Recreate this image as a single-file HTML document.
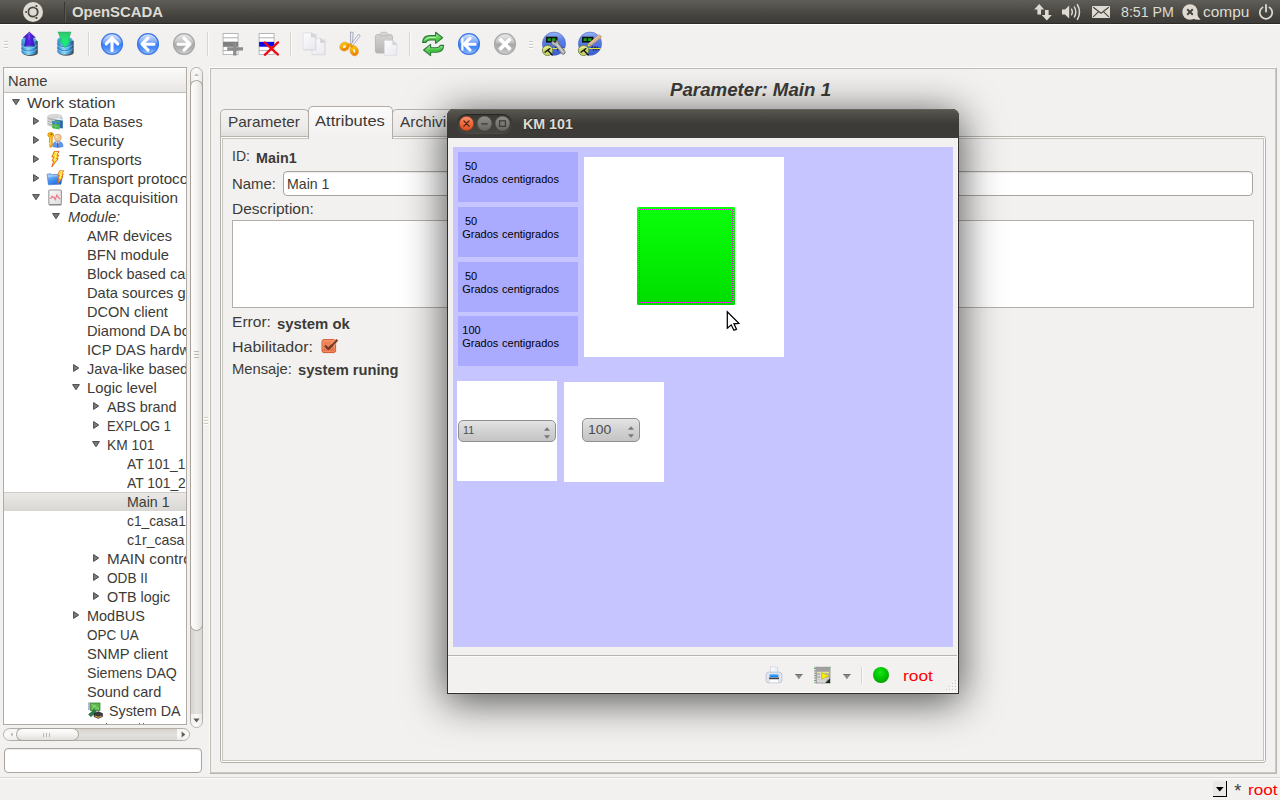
<!DOCTYPE html>
<html><head><meta charset="utf-8"><title>OpenSCADA</title>
<style>
html,body{margin:0;padding:0;width:1280px;height:800px;overflow:hidden;background:#f2f1f0;font-family:"Liberation Sans",sans-serif;}
#root{position:relative;width:1280px;height:800px;overflow:hidden;background:#f2f1f0;}
.t{position:absolute;white-space:pre;}
.a{position:absolute;}
svg{position:absolute;overflow:visible;}
</style></head><body><div id="root">
<div class="a" style="left:0;top:0;width:1280px;height:23px;background:linear-gradient(#5f5e58 0%,#55544f 25%,#4a4944 52%,#403f3b 80%,#3c3b37 100%);"></div><div class="a" style="left:0;top:23px;width:1280px;height:1px;background:#2b2a27;"></div><div class="a" style="left:64px;top:2px;width:1px;height:20px;background:#383733;"></div><div class="a" style="left:65px;top:2px;width:1px;height:20px;background:#585751;"></div><svg style="left:23px;top:2px" width="20" height="20" viewBox="0 0 20 20"><circle cx="10" cy="10" r="10" fill="#dfdbd2"/>
<circle cx="10" cy="10" r="4.7" fill="none" stroke="#45443f" stroke-width="1.8"/>
<g fill="#dfdbd2"><circle cx="3.2" cy="10" r="1.8"/><circle cx="13.4" cy="4.1" r="1.8"/><circle cx="13.4" cy="15.9" r="1.8"/></g>
<g fill="#45443f"><circle cx="3.2" cy="10" r="1.1"/><circle cx="13.4" cy="4.1" r="1.1"/><circle cx="13.4" cy="15.9" r="1.1"/></g></svg><span class="t " style="left:72.12px;top:3.30px;font-size:15px;line-height:17px;color:#dfdbd2;transform:scaleX(0.9916);transform-origin:0 0;font-weight:bold;">OpenSCADA</span><svg style="left:1034px;top:3px" width="18" height="18" viewBox="0 0 18 18"><g fill="#dfdbd2"><path d="M5.2 1 L10.2 6.5 L7 6.5 L7 11.5 L3.4 11.5 L3.4 6.5 L0.2 6.5 Z"/><path d="M12.8 17.5 L7.8 12 L11 12 L11 7 L14.6 7 L14.6 12 L17.8 12 Z"/></g></svg><svg style="left:1061px;top:3px" width="21" height="18" viewBox="0 0 21 18"><g fill="#dfdbd2"><path d="M1 6.5 L4 6.5 L8.2 2.6 L8.2 15.4 L4 11.5 L1 11.5 Z"/></g>
<g fill="none" stroke="#dfdbd2" stroke-width="1.5" stroke-linecap="round"><path d="M10.6 6.2 Q12.2 9 10.6 11.8"/><path d="M13.4 4 Q16.2 9 13.4 14"/><path d="M16.4 1.6 Q20.6 9 16.4 16.4"/></g></svg><svg style="left:1092px;top:6px" width="18" height="12" viewBox="0 0 18 12"><rect x="0" y="0" width="18" height="12" rx="1" fill="#dfdbd2"/><path d="M1.2 1.2 L9 7.2 L16.8 1.2 M1.2 10.8 L6.6 5.6 M16.8 10.8 L11.4 5.6" stroke="#45443f" stroke-width="1.1" fill="none"/></svg><span class="t " style="left:1120.62px;top:2.90px;font-size:15px;line-height:17px;color:#dfdbd2;transform:scaleX(0.9468);transform-origin:0 0;">8:51 PM</span><svg style="left:1182px;top:4px" width="19" height="17" viewBox="0 0 19 17"><circle cx="8" cy="8" r="7.7" fill="#dfdbd2"/><path d="M10.5 14.5 Q15 16.2 18.6 15.6 Q15.6 13.6 15.2 9.5 Z" fill="#dfdbd2"/><path d="M5.2 5.2 L10.8 10.8 M10.8 5.2 L5.2 10.8" stroke="#45443f" stroke-width="2" /></svg><span class="t " style="left:1202.62px;top:2.90px;font-size:15px;line-height:17px;color:#dfdbd2;transform:scaleX(1.0304);transform-origin:0 0;">compu</span><svg style="left:1258px;top:4px" width="16" height="16" viewBox="0 0 16 16"><path d="M4.6 3.4 A6.2 6.2 0 1 0 11.4 3.4" fill="none" stroke="#dfdbd2" stroke-width="1.7" stroke-linecap="round"/><path d="M8 0.8 L8 7.6" stroke="#dfdbd2" stroke-width="1.8" stroke-linecap="round"/></svg><div class="a" style="left:0;top:24px;width:1280px;height:1px;background:#ffffff;"></div><div class="a" style="left:4px;top:41px;width:4px;height:1px;background:#cfcbc5;"></div><div class="a" style="left:4px;top:42px;width:4px;height:1px;background:#ffffff;"></div><div class="a" style="left:4px;top:44px;width:4px;height:1px;background:#cfcbc5;"></div><div class="a" style="left:4px;top:45px;width:4px;height:1px;background:#ffffff;"></div><div class="a" style="left:4px;top:47px;width:4px;height:1px;background:#cfcbc5;"></div><div class="a" style="left:4px;top:48px;width:4px;height:1px;background:#ffffff;"></div><div class="a" style="left:529px;top:41px;width:4px;height:1px;background:#cfcbc5;"></div><div class="a" style="left:529px;top:42px;width:4px;height:1px;background:#ffffff;"></div><div class="a" style="left:529px;top:44px;width:4px;height:1px;background:#cfcbc5;"></div><div class="a" style="left:529px;top:45px;width:4px;height:1px;background:#ffffff;"></div><div class="a" style="left:529px;top:47px;width:4px;height:1px;background:#cfcbc5;"></div><div class="a" style="left:529px;top:48px;width:4px;height:1px;background:#ffffff;"></div><div class="a" style="left:88px;top:32px;width:1px;height:24px;background:#d9d6d2;"></div><div class="a" style="left:89px;top:32px;width:1px;height:24px;background:#fafaf9;"></div><div class="a" style="left:207px;top:32px;width:1px;height:24px;background:#d9d6d2;"></div><div class="a" style="left:208px;top:32px;width:1px;height:24px;background:#fafaf9;"></div><div class="a" style="left:290px;top:32px;width:1px;height:24px;background:#d9d6d2;"></div><div class="a" style="left:291px;top:32px;width:1px;height:24px;background:#fafaf9;"></div><div class="a" style="left:409px;top:32px;width:1px;height:24px;background:#d9d6d2;"></div><div class="a" style="left:410px;top:32px;width:1px;height:24px;background:#fafaf9;"></div><svg width="0" height="0" style="left:0;top:0"><defs>
<linearGradient id="cyl" x1="0" y1="0" x2="1" y2="0"><stop offset="0" stop-color="#2a7fc4"/><stop offset="0.45" stop-color="#8fd8f6"/><stop offset="0.8" stop-color="#3b9ad6"/><stop offset="1" stop-color="#1c5f9c"/></linearGradient>
<linearGradient id="pur" x1="0" y1="0" x2="1" y2="0"><stop offset="0" stop-color="#3a12b8"/><stop offset="0.5" stop-color="#5a25e8"/><stop offset="1" stop-color="#3a10b0"/></linearGradient>
<linearGradient id="grn" x1="0" y1="0" x2="0" y2="1"><stop offset="0" stop-color="#36c070"/><stop offset="0.5" stop-color="#20e870"/><stop offset="1" stop-color="#12f078"/></linearGradient>
<linearGradient id="bluec" x1="0" y1="0" x2="0" y2="1"><stop offset="0" stop-color="#dfe9ff"/><stop offset="0.42" stop-color="#7ba6f6"/><stop offset="0.5" stop-color="#3a82ff"/><stop offset="0.7" stop-color="#4a8cfb"/><stop offset="1" stop-color="#9cc0f8"/></linearGradient>
<linearGradient id="grayc" x1="0" y1="0" x2="0" y2="1"><stop offset="0" stop-color="#ececec"/><stop offset="0.42" stop-color="#c4c4c4"/><stop offset="0.5" stop-color="#a9a9a9"/><stop offset="0.7" stop-color="#b0b0b0"/><stop offset="1" stop-color="#d0d0d0"/></linearGradient>
<linearGradient id="doc" x1="0" y1="0" x2="1" y2="1"><stop offset="0" stop-color="#fdfdfe"/><stop offset="1" stop-color="#e9e9ef"/></linearGradient>
<linearGradient id="clip" x1="0" y1="0" x2="0" y2="1"><stop offset="0" stop-color="#d4d4d4"/><stop offset="1" stop-color="#b4b4b4"/></linearGradient>
<radialGradient id="scada" cx="0.5" cy="0.35" r="0.75"><stop offset="0" stop-color="#6f92ee"/><stop offset="0.7" stop-color="#3b62d6"/><stop offset="1" stop-color="#2a48b0"/></radialGradient>
</defs></svg><svg style="left:17px;top:31px" width="24" height="25" viewBox="0 0 24 25"><g transform="translate(4.5,6.5)"><path d="M0 2.5 L0 14.5 A7.5 3 0 0 0 15 14.5 L15 2.5 Z" transform="translate(1.3,1)" fill="#1a1a1a" opacity="0.75"/><path d="M0 2.5 L0 14.5 A7.5 3 0 0 0 15 14.5 L15 2.5 Z" fill="url(#cyl)"/><ellipse cx="7.5" cy="2.5" rx="7.5" ry="2.6" fill="#4eaadc"/><path d="M0 6.5 A7.5 3 0 0 0 15 6.5" fill="none" stroke="#1f6fb0" stroke-width="0.9" opacity="0.8"/><path d="M0 7.4 A7.5 3 0 0 0 15 7.4" fill="none" stroke="#b4e8ff" stroke-width="0.7" opacity="0.7"/><path d="M0 10.5 A7.5 3 0 0 0 15 10.5" fill="none" stroke="#1f6fb0" stroke-width="0.9" opacity="0.8"/><path d="M0 11.4 A7.5 3 0 0 0 15 11.4" fill="none" stroke="#b4e8ff" stroke-width="0.7" opacity="0.7"/></g><path d="M12.3 1 L18.4 6.6 L15.6 6.8 L17.4 14.8 L7.4 14.8 L9.2 6.8 L6.2 6.6 Z" fill="url(#pur)" stroke="#3010a0" stroke-width="0.5" stroke-linejoin="round"/><path d="M12 2.6 L12 8" stroke="#8a6af0" stroke-width="1.6" opacity="0.6" stroke-linecap="round"/></svg><svg style="left:53px;top:31px" width="24" height="25" viewBox="0 0 24 25"><g transform="translate(4.4,6.2)"><path d="M0 2.5 L0 14.5 A7.5 3 0 0 0 15 14.5 L15 2.5 Z" transform="translate(1.3,1)" fill="#1a1a1a" opacity="0.75"/><path d="M0 2.5 L0 14.5 A7.5 3 0 0 0 15 14.5 L15 2.5 Z" fill="url(#cyl)"/><ellipse cx="7.5" cy="2.5" rx="7.5" ry="2.6" fill="#4eaadc"/><path d="M0 6.5 A7.5 3 0 0 0 15 6.5" fill="none" stroke="#1f6fb0" stroke-width="0.9" opacity="0.8"/><path d="M0 7.4 A7.5 3 0 0 0 15 7.4" fill="none" stroke="#b4e8ff" stroke-width="0.7" opacity="0.7"/><path d="M0 10.5 A7.5 3 0 0 0 15 10.5" fill="none" stroke="#1f6fb0" stroke-width="0.9" opacity="0.8"/><path d="M0 11.4 A7.5 3 0 0 0 15 11.4" fill="none" stroke="#b4e8ff" stroke-width="0.7" opacity="0.7"/></g><path d="M5 1 L18 1 L15.4 9.4 L17.6 9.2 L12 16.8 L6.4 9.2 L8.4 9.4 Z" fill="url(#grn)" stroke="#18a858" stroke-width="0.5" stroke-linejoin="round"/></svg><svg style="left:100px;top:32px" width="24" height="24" viewBox="0 0 24 24"><circle cx="12" cy="12.3" r="10.9" fill="#000" opacity="0.08"/><circle cx="12" cy="12" r="10.4" fill="url(#bluec)" stroke="#3b78e6" stroke-width="1.3"/><path d="M12 18.4 L12 6.6 M6.2 11.8 L12 6 L17.8 11.8" fill="none" stroke="#fff" stroke-width="3.1" stroke-linecap="round" stroke-linejoin="round"/></svg><svg style="left:136px;top:32px" width="24" height="24" viewBox="0 0 24 24"><circle cx="12" cy="12.3" r="10.9" fill="#000" opacity="0.08"/><circle cx="12" cy="12" r="10.4" fill="url(#bluec)" stroke="#3b78e6" stroke-width="1.3"/><path d="M18 12.2 L6.8 12.2 M12 6.2 L6 12.2 L12 18.2" fill="none" stroke="#fff" stroke-width="3.1" stroke-linecap="round" stroke-linejoin="round"/></svg><svg style="left:172px;top:32px" width="24" height="24" viewBox="0 0 24 24"><circle cx="12" cy="12.3" r="10.9" fill="#000" opacity="0.08"/><circle cx="12" cy="12" r="10.4" fill="url(#grayc)" stroke="#a8a8a8" stroke-width="1.3"/><path d="M6 12.2 L17.2 12.2 M12 6.2 L18 12.2 L12 18.2" fill="none" stroke="#fff" stroke-width="3.1" stroke-linecap="round" stroke-linejoin="round"/></svg><svg style="left:222px;top:32px" width="24" height="24" viewBox="0 0 24 24"><g transform="translate(0.6,0)"><rect x="0.5" y="1.5" width="15" height="21" fill="#fff" stroke="#b8b8b8" stroke-width="1"/><path d="M0.5 5.8 L15.5 5.8" stroke="#b0b0b0" stroke-width="1"/><path d="M0.5 10.0 L15.5 10.0" stroke="#b0b0b0" stroke-width="1"/><path d="M0.5 14.6 L15.5 14.6" stroke="#b0b0b0" stroke-width="1"/><path d="M0.5 18.6 L15.5 18.6" stroke="#b0b0b0" stroke-width="1"/><rect x="0.5" y="10" width="15" height="4.6" fill="#7f7f7f"/></g><path d="M5.2 16.9 L21 16.9 M12.8 11 L12.8 23.6" stroke="#8c8c8c" stroke-width="3.3" stroke-linecap="butt"/></svg><svg style="left:258px;top:32px" width="24" height="24" viewBox="0 0 24 24"><g transform="translate(0.6,0)"><rect x="0.5" y="1.5" width="15" height="21" fill="#fff" stroke="#b8b8b8" stroke-width="1"/><path d="M0.5 5.8 L15.5 5.8" stroke="#b0b0b0" stroke-width="1"/><path d="M0.5 10.0 L15.5 10.0" stroke="#b0b0b0" stroke-width="1"/><path d="M0.5 14.6 L15.5 14.6" stroke="#b0b0b0" stroke-width="1"/><path d="M0.5 18.6 L15.5 18.6" stroke="#b0b0b0" stroke-width="1"/><rect x="0.5" y="10" width="15" height="4.6" fill="#0a0aee"/></g><path d="M6.6 10.4 L20 22.6 M20 10.4 L6.8 22.8" stroke="#ee0a14" stroke-width="2.3" stroke-linecap="round"/></svg><svg style="left:302px;top:32px" width="25" height="24" viewBox="0 0 25 24"><rect x="10.6" y="7.3" width="13" height="16" fill="#000" opacity="0.08"/><path d="M10.0 6.4 L18.6 6.4 L22.6 10.4 L22.6 22.4 L10.0 22.4 Z" fill="url(#doc)" stroke="#dadae2" stroke-width="0.8" stroke-linejoin="round"/><path d="M18.6 6.4 L18.6 10.4 L22.6 10.4 Z" fill="#d6d6de" stroke="#c8c8d0" stroke-width="0.6"/><rect x="1.6" y="1.6" width="13" height="17" fill="#000" opacity="0.08"/><path d="M1.0 0.8 L9.4 0.8 L13.4 4.8 L13.4 17.4 L1.0 17.4 Z" fill="url(#doc)" stroke="#dadae2" stroke-width="0.8" stroke-linejoin="round"/><path d="M9.4 0.8 L9.4 4.8 L13.4 4.8 Z" fill="#d6d6de" stroke="#c8c8d0" stroke-width="0.6"/></svg><svg style="left:338px;top:31px" width="25" height="26" viewBox="0 0 25 26"><defs><linearGradient id="sc" x1="0" y1="0" x2="0" y2="1"><stop offset="0" stop-color="#f8c400"/><stop offset="1" stop-color="#f08400"/></linearGradient></defs>
<path d="M12.4 1 L15.2 1.4 L14.4 14.4 L12.6 14.2 Z" fill="#e8e9f2" stroke="#8c90a8" stroke-width="0.7" stroke-linejoin="round"/>
<path d="M20.6 3 L22.2 5 L14.6 14.6 L13 13.4 Z" fill="#f4f4fa" stroke="#8c90a8" stroke-width="0.7" stroke-linejoin="round"/>
<ellipse cx="6.5" cy="15.6" rx="3.2" ry="2.7" transform="rotate(-28 6.5 15.6)" fill="none" stroke="url(#sc)" stroke-width="3"/>
<ellipse cx="16.2" cy="19.8" rx="2.5" ry="3.5" transform="rotate(-18 16.2 19.8)" fill="none" stroke="url(#sc)" stroke-width="3"/>
<path d="M9.6 13.2 L13.4 14.6 L14.4 16.6" fill="none" stroke="#f2a000" stroke-width="2.6"/>
<ellipse cx="6.5" cy="15.6" rx="4.8" ry="4.3" transform="rotate(-28 6.5 15.6)" fill="none" stroke="#d88400" stroke-width="0.5"/>
<ellipse cx="16.2" cy="19.8" rx="4.1" ry="5.1" transform="rotate(-18 16.2 19.8)" fill="none" stroke="#d88400" stroke-width="0.5"/>
</svg><svg style="left:374px;top:31px" width="25" height="26" viewBox="0 0 25 26"><rect x="1.4" y="3.6" width="17" height="18.4" rx="2" fill="url(#clip)" stroke="#b0b0b0" stroke-width="0.8"/><path d="M5.6 4.6 Q5.6 1.2 10 1.2 Q14.4 1.2 14.4 4.6 Z" fill="#d8d8d8" stroke="#b8b8b8" stroke-width="0.8"/><rect x="5" y="3.8" width="10" height="1.6" fill="#c4c4c4"/><path d="M10.4 9.4 L18.8 9.4 L22.8 13.4 L22.8 24.4 L10.4 24.4 Z" fill="url(#doc)" stroke="#dadae2" stroke-width="0.8" stroke-linejoin="round"/><path d="M18.8 9.4 L18.8 13.4 L22.8 13.4 Z" fill="#d6d6de" stroke="#c8c8d0" stroke-width="0.6"/></svg><svg style="left:421px;top:31px" width="24" height="26" viewBox="0 0 24 26"><defs><linearGradient id="rf" x1="0" y1="0" x2="0" y2="1"><stop offset="0" stop-color="#c4f0b8"/><stop offset="0.5" stop-color="#58d050"/><stop offset="1" stop-color="#48b848"/></linearGradient></defs>
<path d="M1.6 11.4 Q2 4.6 9 4.6 L14.6 4.6 L14.6 1.2 L21.6 6.8 L14.6 12.4 L14.6 9 L9 9 Q5.8 9 5 11.4 Z" fill="url(#rf)" stroke="#2c7a36" stroke-width="1.1" stroke-linejoin="round"/>
<path d="M22.6 14.4 Q22.2 21.2 15.2 21.2 L9.6 21.2 L9.6 24.6 L2.6 19 L9.6 13.4 L9.6 16.8 L15.2 16.8 Q18.4 16.8 19.2 14.4 Z" fill="url(#rf)" stroke="#2c7a36" stroke-width="1.1" stroke-linejoin="round"/>
<path d="M4 9.4 Q5.2 6.4 9 6.4 L15 6.4" fill="none" stroke="#f0fff0" stroke-width="0.9" opacity="0.8"/>
<path d="M20.4 16.6 Q19.2 19.4 15.2 19.4 L8 19.4" fill="none" stroke="#30c038" stroke-width="1.2" opacity="0.9"/>
</svg><svg style="left:457px;top:32px" width="24" height="24" viewBox="0 0 24 24"><circle cx="12" cy="12.3" r="10.9" fill="#000" opacity="0.08"/><circle cx="12" cy="12" r="10.4" fill="url(#bluec)" stroke="#3b78e6" stroke-width="1.3"/><path d="M18.2 12.2 L8.6 12.2 M13 6.4 L7.2 12.2 L13 18" fill="none" stroke="#fff" stroke-width="3.1" stroke-linecap="round" stroke-linejoin="round"/><path d="M5.4 6.6 L5.4 17.8" fill="none" stroke="#fff" stroke-width="2.2" stroke-linecap="round"/></svg><svg style="left:493px;top:32px" width="24" height="24" viewBox="0 0 24 24"><circle cx="12" cy="12.3" r="10.9" fill="#000" opacity="0.08"/><circle cx="12" cy="12" r="10.4" fill="url(#grayc)" stroke="#a8a8a8" stroke-width="1.3"/><path d="M6.6 6.8 L17.4 17.6 M17.4 6.8 L6.6 17.6" fill="none" stroke="#fff" stroke-width="3.7" stroke-linecap="butt"/></svg><svg style="left:541px;top:31px" width="27" height="26" viewBox="0 0 27 26"><defs><linearGradient id="scg554" x1="0" y1="0" x2="0" y2="1"><stop offset="0" stop-color="#9ab4f4"/><stop offset="0.35" stop-color="#5a80e6"/><stop offset="1" stop-color="#3a5ed0"/></linearGradient></defs><circle cx="13" cy="12.7" r="11.6" fill="url(#scg554)" stroke="#4464c4" stroke-width="0.6"/><rect x="5.2" y="6" width="10.9" height="5.2" fill="#0a1406" stroke="#050a04" stroke-width="0.5"/><rect x="6.6" y="7.2" width="3.2" height="2.8" fill="#1e9a1e"/><rect x="11" y="7.2" width="3.6" height="2.8" fill="#1e9a1e"/><path d="M14 17.6 L15.4 15.2 L16.6 19.6 L18 15.4 L19.2 19.4 L20.4 15.6 L21.6 19 L22.6 16.6" fill="none" stroke="#182040" stroke-width="1" opacity="0.85"/><path d="M6 17.5 L23.6 17.5" stroke="#e4e43c" stroke-width="1"/><path d="M10.6 12.6 Q10 10.4 12 9.4 L13.4 11.4 L15.2 11 L15.4 9 Q18 9.6 17.6 12.6 L24 20.4 Q24.6 22 23.2 23 Q22 23.8 20.8 22.8 L14.6 15 Q11.6 15.6 10.6 12.6 Z" fill="#b4b4b4" stroke="#585858" stroke-width="0.7" stroke-linejoin="round"/><path d="M15.6 13.4 L22.4 21.4" stroke="#dcdcdc" stroke-width="0.9"/><circle cx="6.6" cy="19.4" r="5.2" fill="#c6d66a" stroke="#5c6828" stroke-width="0.7"/><path d="M2.4 18 Q6 14.6 10.8 17.6" fill="none" stroke="#e8f0a0" stroke-width="1.6" opacity="0.7"/><path d="M3.6 21.6 L9.3 17.2 M6.8 19.2 L11.6 24.4" stroke="#10100a" stroke-width="1.3" fill="none"/></svg><svg style="left:577px;top:31px" width="27" height="26" viewBox="0 0 27 26"><defs><linearGradient id="scg590" x1="0" y1="0" x2="0" y2="1"><stop offset="0" stop-color="#9ab4f4"/><stop offset="0.35" stop-color="#5a80e6"/><stop offset="1" stop-color="#3a5ed0"/></linearGradient></defs><circle cx="13" cy="12.7" r="11.6" fill="url(#scg590)" stroke="#4464c4" stroke-width="0.6"/><rect x="5.2" y="6" width="10.9" height="5.2" fill="#0a1406" stroke="#050a04" stroke-width="0.5"/><rect x="6.6" y="7.2" width="3.2" height="2.8" fill="#1e9a1e"/><rect x="11" y="7.2" width="3.6" height="2.8" fill="#1e9a1e"/><path d="M14 17.6 L15.4 15.2 L16.6 19.6 L18 15.4 L19.2 19.4 L20.4 15.6 L21.6 19 L22.6 16.6" fill="none" stroke="#182040" stroke-width="1" opacity="0.85"/><path d="M6 17.5 L23.6 17.5" stroke="#e4e43c" stroke-width="1"/><path d="M22.2 3.4 L24.8 6 L13.6 15 L11.4 12.6 Z" fill="#d8b48c" stroke="#a88460" stroke-width="0.5"/><path d="M22.8 3.8 L12.4 12.6" stroke="#ecd0b0" stroke-width="0.9"/><path d="M11.4 12.6 L13.6 15 L10 16.2 Z" fill="#e8dc78" stroke="#8a8040" stroke-width="0.4"/><path d="M10 16.2 L10.9 15.1 L11.2 15.9 Z" fill="#111"/><circle cx="6.6" cy="19.4" r="5.2" fill="#c6d66a" stroke="#5c6828" stroke-width="0.7"/><path d="M2.4 18 Q6 14.6 10.8 17.6" fill="none" stroke="#e8f0a0" stroke-width="1.6" opacity="0.7"/><path d="M3.6 21.6 L9.3 17.2 M6.8 19.2 L11.6 24.4" stroke="#10100a" stroke-width="1.3" fill="none"/></svg><div class="a" style="left:3px;top:67px;width:182px;height:656px;border:1px solid #b0aca5;background:#fff;overflow:hidden;"><div class="a" style="left:-4px;top:-68px;width:400px;height:800px;"><div class="a" style="left:4px;top:68px;width:182px;height:24px;background:linear-gradient(#ffffff 0,#f8f8f7 8%,#f1f0ef 55%,#e7e6e4 100%);border-bottom:1px solid #c2beb8;"></div><span class="t " style="left:8.03px;top:72.20px;font-size:15px;line-height:17px;color:#3c3b37;transform:scaleX(0.9846);transform-origin:0 0;">Name</span><div class="a" style="left:4px;top:492px;width:182px;height:19px;background:linear-gradient(#eae9e7,#d9d7d3);border-top:1px solid #cfccc7;box-sizing:border-box;"></div><svg style="left:12.2px;top:99.0px" width="8" height="7" viewBox="0 0 8 7"><path d="M0.6 0.6 L7.4 0.6 L4 5.7 Z" fill="#7d7d7d" stroke="#3c3c3c" stroke-width="0.9" stroke-linejoin="round"/></svg><span class="t " style="left:27.12px;top:93.50px;font-size:15px;line-height:17px;color:#3c3b37;transform:scaleX(1.0651);transform-origin:0 0;">Work station</span><svg style="left:33.0px;top:117.4px" width="7" height="8" viewBox="0 0 7 8"><path d="M0.6 0.6 L5.7 4 L0.6 7.4 Z" fill="#7d7d7d" stroke="#3c3c3c" stroke-width="0.9" stroke-linejoin="round"/></svg><svg style="left:47px;top:113px" width="17" height="17" viewBox="0 0 17 17"><path d="M0.4 3.2 L0.4 11.4 A7.4 2.6 0 0 0 15.2 11.4 L15.2 3.2 Z" fill="#b4b4b4"/><ellipse cx="7.8" cy="3.2" rx="7.4" ry="2.5" fill="#d8d8d8"/><path d="M0.4 5.8 A7.4 2.6 0 0 0 9 8.2 M0.4 8.4 A7.4 2.6 0 0 0 9 10.8 M0.4 11 A7.4 2.6 0 0 0 9 13.6" fill="none" stroke="#ececec" stroke-width="0.9"/><path d="M8 4.6 L15.8 5.6 L15.8 15.6 L8 14.6 Z" fill="#3a78b8"/><path d="M8 4.6 L15.8 5.6 L15.8 7.6 L8 6.6 Z" fill="#e4eef4"/><path d="M8.6 7.4 L12.6 7.9 L12.6 11 L8.6 10.5 Z" fill="#48b848"/><path d="M13.2 8 L15.4 8.3 L15.4 15 L13.2 14.7 Z" fill="#2a6a9a"/><path d="M5.2 8 L12.6 9.2 L12.6 16.4 L5.2 15.2 Z" fill="#46b04c"/><path d="M5.2 8 L12.6 9.2 L12.6 11.6 L5.2 10.4 Z" fill="#3f80d0"/><path d="M5.2 12.8 L12.6 14 M8.8 8.6 L8.8 15.8" stroke="#8cd890" stroke-width="0.5"/></svg><span class="t " style="left:69.12px;top:112.50px;font-size:15px;line-height:17px;color:#3c3b37;transform:scaleX(0.9478);transform-origin:0 0;">Data Bases</span><svg style="left:33.0px;top:136.4px" width="7" height="8" viewBox="0 0 7 8"><path d="M0.6 0.6 L5.7 4 L0.6 7.4 Z" fill="#7d7d7d" stroke="#3c3c3c" stroke-width="0.9" stroke-linejoin="round"/></svg><svg style="left:47px;top:132px" width="17" height="17" viewBox="0 0 17 17"><path d="M5.6 14.6 Q5.4 9.4 10.8 9.4 Q16.2 9.4 16 14.6 Q10.8 16.4 5.6 14.6 Z" fill="#5a9af0" stroke="#3068c8" stroke-width="0.5"/><path d="M8.4 9.8 L10.7 12.2 L13 9.8 Z" fill="#eaf2ff"/><path d="M10.2 10.2 L10 14.6 L10.7 15.3 L11.4 14.6 L11.2 10.2 Z" fill="#e02828"/><circle cx="10.8" cy="5.6" r="3.5" fill="#f0c898" stroke="#c89460" stroke-width="0.6"/><circle cx="9.8" cy="4.6" r="1.4" fill="#fbe4c4" opacity="0.8"/><path d="M0.8 2.6 Q0.8 0.6 3.6 0.6 Q6.6 0.6 6.6 2.8 Q6.6 4.8 5.2 5.2 L5.2 13.4 L3.9 15.4 L2.4 14.2 L3.2 13.2 L2.4 12.2 L3.2 11.2 L2.4 10.2 L2.6 5.2 Q0.8 4.8 0.8 2.6 Z" fill="#f8b808" stroke="#d07800" stroke-width="0.7" stroke-linejoin="round"/><circle cx="4.4" cy="2.4" r="0.8" fill="#7a4800"/><path d="M3.6 5.6 L3.6 13" stroke="#ffe060" stroke-width="0.8"/></svg><span class="t " style="left:69.03px;top:131.50px;font-size:15px;line-height:17px;color:#3c3b37;transform:scaleX(1.0095);transform-origin:0 0;">Security</span><svg style="left:33.0px;top:155.4px" width="7" height="8" viewBox="0 0 7 8"><path d="M0.6 0.6 L5.7 4 L0.6 7.4 Z" fill="#7d7d7d" stroke="#3c3c3c" stroke-width="0.9" stroke-linejoin="round"/></svg><svg style="left:47px;top:151px" width="17" height="17" viewBox="0 0 17 17"><path transform="translate(3.6,0.2) scale(1.00)" d="M3.6 0.2 L8.4 0.2 L6.4 4 L8.2 4 L6 7.4 L7.6 7.4 L1.2 15.8 L3.2 9.6 L1.4 9.6 L3.4 5.8 L1.2 5.8 Z" fill="#fadc20" stroke="#e8601a" stroke-width="0.9" stroke-linejoin="round"/><path transform="translate(3.6,0.2) scale(1.00)" d="M4.4 1.2 L6.6 1.2 L4.6 5 L5.6 5 L3.4 9 L4.6 9" fill="none" stroke="#fff8a0" stroke-width="0.9"/></svg><span class="t " style="left:69.23px;top:150.50px;font-size:15px;line-height:17px;color:#3c3b37;transform:scaleX(1.0219);transform-origin:0 0;">Transports</span><svg style="left:33.0px;top:174.4px" width="7" height="8" viewBox="0 0 7 8"><path d="M0.6 0.6 L5.7 4 L0.6 7.4 Z" fill="#7d7d7d" stroke="#3c3c3c" stroke-width="0.9" stroke-linejoin="round"/></svg><svg style="left:46px;top:170px" width="18" height="17" viewBox="0 0 18 17"><defs><linearGradient id="fold" x1="0" y1="0" x2="0.6" y2="1"><stop offset="0" stop-color="#b8d4fa"/><stop offset="0.55" stop-color="#4a94f0"/><stop offset="1" stop-color="#1f68d8"/></linearGradient></defs><path d="M1 4.2 L4.6 3.6 L5.6 4.6 L15.4 4.2 L15.8 5.6 L16.6 5.6 L15 14.2 L2.4 14.8 Z" fill="url(#fold)" stroke="#2a6cd0" stroke-width="0.5" stroke-linejoin="round"/><path d="M2 6.2 L14.6 5.6" stroke="#e4f0ff" stroke-width="0.7" opacity="0.8"/><path transform="translate(10.6,0.6) scale(0.84)" d="M3.6 0.2 L8.4 0.2 L6.4 4 L8.2 4 L6 7.4 L7.6 7.4 L1.2 15.8 L3.2 9.6 L1.4 9.6 L3.4 5.8 L1.2 5.8 Z" fill="#fadc20" stroke="#e8601a" stroke-width="0.9" stroke-linejoin="round"/><path transform="translate(10.6,0.6) scale(0.84)" d="M4.4 1.2 L6.6 1.2 L4.6 5 L5.6 5 L3.4 9 L4.6 9" fill="none" stroke="#fff8a0" stroke-width="0.9"/></svg><span class="t " style="left:69.23px;top:169.50px;font-size:15px;line-height:17px;color:#3c3b37;transform:scaleX(1.0110);transform-origin:0 0;">Transport protocols</span><svg style="left:31.7px;top:194.0px" width="8" height="7" viewBox="0 0 8 7"><path d="M0.6 0.6 L7.4 0.6 L4 5.7 Z" fill="#7d7d7d" stroke="#3c3c3c" stroke-width="0.9" stroke-linejoin="round"/></svg><svg style="left:47px;top:189px" width="17" height="17" viewBox="0 0 17 17"><defs><linearGradient id="daqg" x1="0" y1="0" x2="1" y2="1"><stop offset="0" stop-color="#f8f8f8"/><stop offset="1" stop-color="#dcdcdc"/></linearGradient></defs><rect x="1.8" y="1" width="12.6" height="14.6" rx="1" fill="url(#daqg)" stroke="#9c9c9c" stroke-width="1.1"/><path d="M2 15.9 L14.4 15.9" stroke="#7c7c7c" stroke-width="0.9"/><path d="M2.8 9.6 L4.2 9 L5 7.2 L6.2 8.6 L7 8 L8.2 10.6 L9 8.6 L9.8 6 L10.8 7.4 L11.6 8.6 L12.4 9.4 L13.4 9.6" fill="none" stroke="#f06878" stroke-width="1.1" opacity="0.9"/></svg><span class="t " style="left:69.12px;top:188.50px;font-size:15px;line-height:17px;color:#3c3b37;transform:scaleX(1.0222);transform-origin:0 0;">Data acquisition</span><svg style="left:51.7px;top:213.0px" width="8" height="7" viewBox="0 0 8 7"><path d="M0.6 0.6 L7.4 0.6 L4 5.7 Z" fill="#7d7d7d" stroke="#3c3c3c" stroke-width="0.9" stroke-linejoin="round"/></svg><span class="t " style="left:67.83px;top:207.50px;font-size:15px;line-height:17px;color:#3c3b37;transform:scaleX(0.9761);transform-origin:0 0;font-style:italic;">Module:</span><span class="t " style="left:86.53px;top:226.50px;font-size:15px;line-height:17px;color:#3c3b37;transform:scaleX(0.9608);transform-origin:0 0;">AMR devices</span><span class="t " style="left:86.53px;top:245.50px;font-size:15px;line-height:17px;color:#3c3b37;transform:scaleX(0.9823);transform-origin:0 0;">BFN module</span><span class="t " style="left:86.53px;top:264.50px;font-size:15px;line-height:17px;color:#3c3b37;transform:scaleX(0.9653);transform-origin:0 0;">Block based calculator</span><span class="t " style="left:86.53px;top:283.50px;font-size:15px;line-height:17px;color:#3c3b37;transform:scaleX(0.9777);transform-origin:0 0;">Data sources gate</span><span class="t " style="left:86.53px;top:302.50px;font-size:15px;line-height:17px;color:#3c3b37;transform:scaleX(0.9705);transform-origin:0 0;">DCON client</span><span class="t " style="left:86.53px;top:321.50px;font-size:15px;line-height:17px;color:#3c3b37;transform:scaleX(0.9786);transform-origin:0 0;">Diamond DA boards</span><span class="t " style="left:86.53px;top:340.50px;font-size:15px;line-height:17px;color:#3c3b37;transform:scaleX(0.9836);transform-origin:0 0;">ICP DAS hardware</span><svg style="left:73.0px;top:364.4px" width="7" height="8" viewBox="0 0 7 8"><path d="M0.6 0.6 L5.7 4 L0.6 7.4 Z" fill="#7d7d7d" stroke="#3c3c3c" stroke-width="0.9" stroke-linejoin="round"/></svg><span class="t " style="left:86.53px;top:359.50px;font-size:15px;line-height:17px;color:#3c3b37;transform:scaleX(0.9709);transform-origin:0 0;">Java-like based calculator</span><svg style="left:71.7px;top:384.0px" width="8" height="7" viewBox="0 0 8 7"><path d="M0.6 0.6 L7.4 0.6 L4 5.7 Z" fill="#7d7d7d" stroke="#3c3c3c" stroke-width="0.9" stroke-linejoin="round"/></svg><span class="t " style="left:86.53px;top:378.50px;font-size:15px;line-height:17px;color:#3c3b37;transform:scaleX(0.9860);transform-origin:0 0;">Logic level</span><svg style="left:93.0px;top:402.4px" width="7" height="8" viewBox="0 0 7 8"><path d="M0.6 0.6 L5.7 4 L0.6 7.4 Z" fill="#7d7d7d" stroke="#3c3c3c" stroke-width="0.9" stroke-linejoin="round"/></svg><span class="t " style="left:106.53px;top:397.50px;font-size:15px;line-height:17px;color:#3c3b37;transform:scaleX(0.9580);transform-origin:0 0;">ABS brand</span><svg style="left:93.0px;top:421.4px" width="7" height="8" viewBox="0 0 7 8"><path d="M0.6 0.6 L5.7 4 L0.6 7.4 Z" fill="#7d7d7d" stroke="#3c3c3c" stroke-width="0.9" stroke-linejoin="round"/></svg><span class="t " style="left:106.53px;top:416.50px;font-size:15px;line-height:17px;color:#3c3b37;transform:scaleX(0.8611);transform-origin:0 0;">EXPLOG 1</span><svg style="left:91.7px;top:441.0px" width="8" height="7" viewBox="0 0 8 7"><path d="M0.6 0.6 L7.4 0.6 L4 5.7 Z" fill="#7d7d7d" stroke="#3c3c3c" stroke-width="0.9" stroke-linejoin="round"/></svg><span class="t " style="left:106.83px;top:435.50px;font-size:15px;line-height:17px;color:#3c3b37;transform:scaleX(0.9187);transform-origin:0 0;">KM 101</span><span class="t " style="left:127.12px;top:454.50px;font-size:15px;line-height:17px;color:#3c3b37;transform:scaleX(0.9156);transform-origin:0 0;">AT 101_1</span><span class="t " style="left:127.12px;top:473.50px;font-size:15px;line-height:17px;color:#3c3b37;transform:scaleX(0.9235);transform-origin:0 0;">AT 101_2</span><span class="t " style="left:126.83px;top:492.50px;font-size:15px;line-height:17px;color:#3c3b37;transform:scaleX(0.9460);transform-origin:0 0;">Main 1</span><span class="t " style="left:126.53px;top:511.50px;font-size:15px;line-height:17px;color:#3c3b37;transform:scaleX(0.9172);transform-origin:0 0;">c1_casa1</span><span class="t " style="left:126.53px;top:530.50px;font-size:15px;line-height:17px;color:#3c3b37;transform:scaleX(0.9429);transform-origin:0 0;">c1r_casa</span><svg style="left:93.0px;top:554.4px" width="7" height="8" viewBox="0 0 7 8"><path d="M0.6 0.6 L5.7 4 L0.6 7.4 Z" fill="#7d7d7d" stroke="#3c3c3c" stroke-width="0.9" stroke-linejoin="round"/></svg><span class="t " style="left:106.53px;top:549.50px;font-size:15px;line-height:17px;color:#3c3b37;transform:scaleX(1.0158);transform-origin:0 0;">MAIN control</span><svg style="left:93.0px;top:573.4px" width="7" height="8" viewBox="0 0 7 8"><path d="M0.6 0.6 L5.7 4 L0.6 7.4 Z" fill="#7d7d7d" stroke="#3c3c3c" stroke-width="0.9" stroke-linejoin="round"/></svg><span class="t " style="left:106.53px;top:568.50px;font-size:15px;line-height:17px;color:#3c3b37;transform:scaleX(0.9086);transform-origin:0 0;">ODB II</span><svg style="left:93.0px;top:592.4px" width="7" height="8" viewBox="0 0 7 8"><path d="M0.6 0.6 L5.7 4 L0.6 7.4 Z" fill="#7d7d7d" stroke="#3c3c3c" stroke-width="0.9" stroke-linejoin="round"/></svg><span class="t " style="left:106.53px;top:587.50px;font-size:15px;line-height:17px;color:#3c3b37;transform:scaleX(0.9596);transform-origin:0 0;">OTB logic</span><svg style="left:73.0px;top:611.4px" width="7" height="8" viewBox="0 0 7 8"><path d="M0.6 0.6 L5.7 4 L0.6 7.4 Z" fill="#7d7d7d" stroke="#3c3c3c" stroke-width="0.9" stroke-linejoin="round"/></svg><span class="t " style="left:86.53px;top:606.50px;font-size:15px;line-height:17px;color:#3c3b37;transform:scaleX(0.9645);transform-origin:0 0;">ModBUS</span><span class="t " style="left:86.53px;top:625.50px;font-size:15px;line-height:17px;color:#3c3b37;transform:scaleX(0.8989);transform-origin:0 0;">OPC UA</span><span class="t " style="left:86.53px;top:644.50px;font-size:15px;line-height:17px;color:#3c3b37;transform:scaleX(0.9834);transform-origin:0 0;">SNMP client</span><span class="t " style="left:86.53px;top:663.50px;font-size:15px;line-height:17px;color:#3c3b37;transform:scaleX(0.9458);transform-origin:0 0;">Siemens DAQ</span><span class="t " style="left:86.53px;top:682.50px;font-size:15px;line-height:17px;color:#3c3b37;transform:scaleX(0.9683);transform-origin:0 0;">Sound card</span><svg style="left:88px;top:702px" width="16" height="17" viewBox="0 0 16 17"><path d="M1 0.4 L1 8" stroke="#6a6aa8" stroke-width="1"/><rect x="2.4" y="1" width="9.6" height="7.6" fill="#58b848" stroke="#2c7c30" stroke-width="0.7"/><path d="M3.6 2.4 L10.8 7.2 M4 6.4 L8 3" stroke="#a8e098" stroke-width="0.8"/><path d="M0.6 12.4 L6.2 7.6 L8.4 10 L2.8 14.8 Z" fill="#2c7c48" stroke="#184c28" stroke-width="0.5"/><path d="M6 11.6 L10.4 9.6 L14.6 11.6 L14.6 14.6 L10.2 16.4 L6 14.6 Z" fill="#3a3a3a" stroke="#1c1c1c" stroke-width="0.5"/><path d="M7 13.4 L10.2 14.8 L13.6 13.4 L13.6 14.6 L10.2 16 L7 14.6 Z" fill="#e8a040"/></svg><span class="t " style="left:109.23px;top:701.50px;font-size:15px;line-height:17px;color:#3c3b37;transform:scaleX(0.9531);transform-origin:0 0;">System DA</span><div class="a" style="left:106px;top:723px;width:1px;height:1px;background:#6a6a68;"></div><div class="a" style="left:139px;top:723px;width:1px;height:1px;background:#6a6a68;"></div><div class="a" style="left:143px;top:723px;width:1px;height:1px;background:#6a6a68;"></div></div></div><div class="a" style="left:190px;top:67px;width:11px;height:659px;border:1px solid #b3afa8;border-radius:7px;background:linear-gradient(90deg,#d6d3cf,#e4e2df 50%,#dcdad6);box-sizing:content-box;"></div><div class="a" style="left:191px;top:68px;width:11px;height:13px;border-radius:6px 6px 0 0;background:linear-gradient(90deg,#f1f0ee,#fafaf9 50%,#ebeae8);"></div><div class="a" style="left:191px;top:714px;width:11px;height:13px;border-radius:0 0 6px 6px;background:linear-gradient(90deg,#f1f0ee,#fafaf9 50%,#ebeae8);"></div><div class="a" style="left:190px;top:80px;width:11px;height:549px;border:1px solid #a6a29b;border-radius:7px;background:linear-gradient(90deg,#fdfdfd,#f6f5f4 45%,#e3e1de);"></div><svg style="left:194px;top:73px" width="5" height="3" viewBox="0 0 5 3"><path d="M0.2 2.8 L2.5 0.4 L4.8 2.8 Z" fill="#b0ada7"/></svg><svg style="left:193px;top:718px" width="7" height="5" viewBox="0 0 7 5"><path d="M0.4 0.6 L6.6 0.6 L3.5 4.4 Z" fill="#5e5d5a"/></svg><div class="a" style="left:194px;top:351px;width:5px;height:1px;background:#bdbab4;"></div><div class="a" style="left:194px;top:354px;width:5px;height:1px;background:#bdbab4;"></div><div class="a" style="left:194px;top:357px;width:5px;height:1px;background:#bdbab4;"></div><div class="a" style="left:204px;top:417px;width:4px;height:1px;background:#cfccc6;"></div><div class="a" style="left:204px;top:418px;width:4px;height:1px;background:#fff;"></div><div class="a" style="left:204px;top:420px;width:4px;height:1px;background:#cfccc6;"></div><div class="a" style="left:204px;top:421px;width:4px;height:1px;background:#fff;"></div><div class="a" style="left:204px;top:423px;width:4px;height:1px;background:#cfccc6;"></div><div class="a" style="left:204px;top:424px;width:4px;height:1px;background:#fff;"></div><div class="a" style="left:3px;top:728px;width:185px;height:11px;border:1px solid #b3afa8;border-radius:7px;background:linear-gradient(#d6d3cf,#e2e0dd 50%,#dbd9d5);"></div><div class="a" style="left:4px;top:729px;width:13px;height:11px;border-radius:6px 0 0 6px;background:linear-gradient(#f3f2f0,#fafaf9 50%,#ecebe9);"></div><div class="a" style="left:177px;top:729px;width:12px;height:11px;border-radius:0 6px 6px 0;background:linear-gradient(#f3f2f0,#fafaf9 50%,#ecebe9);"></div><div class="a" style="left:16px;top:728px;width:61px;height:11px;border:1px solid #a6a29b;border-radius:7px;background:linear-gradient(#fdfdfd,#f5f4f3 45%,#e2e0dd);"></div><svg style="left:10px;top:732px" width="3" height="5" viewBox="0 0 3 5"><path d="M2.8 0.2 L0.4 2.5 L2.8 4.8 Z" fill="#b9b6b0"/></svg><svg style="left:181px;top:731px" width="5" height="7" viewBox="0 0 5 7"><path d="M0.6 0.4 L4.4 3.5 L0.6 6.6 Z" fill="#5e5d5a"/></svg><div class="a" style="left:43px;top:733px;width:1px;height:4px;background:#b9b6b0;"></div><div class="a" style="left:46px;top:733px;width:1px;height:4px;background:#b9b6b0;"></div><div class="a" style="left:49px;top:733px;width:1px;height:4px;background:#b9b6b0;"></div><div class="a" style="left:4px;top:748px;width:196px;height:23px;border:1px solid #a9a59e;border-radius:4px;background:#fff;box-shadow:inset 0 1px 1px rgba(0,0,0,0.08);"></div><div class="a" style="left:209px;top:67px;width:1068px;height:707px;border-left:1px solid #fcfcfb;border-top:1px solid #fcfcfb;border-right:1px solid #b9b5af;border-bottom:1px solid #b9b5af;box-sizing:border-box;"></div><div class="a" style="left:210px;top:68px;width:1066px;height:705px;border-left:1px solid #bfbbb5;border-top:1px solid #bfbbb5;border-right:1px solid #cbc8c3;border-bottom:1px solid #cbc8c3;box-sizing:border-box;"></div><span class="t " style="left:669.86px;top:80.00px;font-size:17.5px;line-height:20px;color:#3c3b37;transform:scaleX(1.0682);transform-origin:0 0;font-weight:bold;font-style:italic;">Parameter: Main 1</span><div class="a" style="left:220px;top:109px;width:89px;height:28px;border:1px solid #b5b1aa;border-bottom:none;border-radius:5px 5px 0 0;background:linear-gradient(#f4f3f2,#eceae8 70%,#dfddda);box-sizing:border-box;"></div><div class="a" style="left:392px;top:109px;width:90px;height:28px;border:1px solid #b5b1aa;border-bottom:none;border-radius:5px 5px 0 0;background:linear-gradient(#f4f3f2,#eceae8 70%,#dfddda);box-sizing:border-box;"></div><div class="a" style="left:220px;top:136px;width:1046px;height:627px;border:1px solid #b5b1ab;border-radius:0 3px 3px 3px;box-sizing:border-box;background:#f2f1f0;"></div><div class="a" style="left:221px;top:137px;width:1044px;height:625px;border:1px solid #fdfdfd;border-radius:0 2px 2px 2px;box-sizing:border-box;"></div><div class="a" style="left:222px;top:138px;width:1042px;height:623px;border:1px solid #c8c5bf;box-sizing:border-box;"></div><div class="a" style="left:308px;top:106px;width:85px;height:33px;border:1px solid #b1ada6;border-bottom:none;border-radius:5px 5px 0 0;background:linear-gradient(#fbfbfb,#f6f5f5 50%,#f2f1f0);box-sizing:border-box;"></div><span class="t " style="left:227.53px;top:112.60px;font-size:15px;line-height:17px;color:#3c3b37;transform:scaleX(1.0267);transform-origin:0 0;">Parameter</span><span class="t " style="left:315.32px;top:111.90px;font-size:15px;line-height:17px;color:#3c3b37;transform:scaleX(1.1030);transform-origin:0 0;">Attributes</span><span class="t " style="left:400.32px;top:112.60px;font-size:15px;line-height:17px;color:#3c3b37;transform:scaleX(1.0267);transform-origin:0 0;">Archiving</span><span class="t " style="left:231.53px;top:147.00px;font-size:15px;line-height:17px;color:#3c3b37;transform:scaleX(0.9337);transform-origin:0 0;">ID:</span><span class="t " style="left:256.02px;top:148.60px;font-size:15px;line-height:17px;color:#3c3b37;transform:scaleX(0.9549);transform-origin:0 0;font-weight:bold;">Main1</span><span class="t " style="left:231.53px;top:174.80px;font-size:15px;line-height:17px;color:#3c3b37;transform:scaleX(0.9935);transform-origin:0 0;">Name:</span><div class="a" style="left:283px;top:171px;width:970px;height:25px;border:1px solid #a9a59e;border-radius:4px;background:#fff;box-sizing:border-box;box-shadow:inset 0 1px 1px rgba(0,0,0,0.08);"></div><span class="t " style="left:286.82px;top:174.80px;font-size:15px;line-height:17px;color:#3c3b37;transform:scaleX(0.9438);transform-origin:0 0;">Main 1</span><span class="t " style="left:231.53px;top:199.80px;font-size:15px;line-height:17px;color:#3c3b37;transform:scaleX(1.0341);transform-origin:0 0;">Description:</span><div class="a" style="left:232px;top:220px;width:1022px;height:88px;border:1px solid #b3afa8;background:#fff;box-sizing:border-box;"></div><span class="t " style="left:231.53px;top:313.00px;font-size:15px;line-height:17px;color:#3c3b37;transform:scaleX(1.0373);transform-origin:0 0;">Error:</span><span class="t " style="left:276.52px;top:314.80px;font-size:15px;line-height:17px;color:#3c3b37;transform:scaleX(0.9935);transform-origin:0 0;font-weight:bold;">system ok</span><span class="t " style="left:231.53px;top:337.60px;font-size:15px;line-height:17px;color:#3c3b37;transform:scaleX(1.0662);transform-origin:0 0;">Habilitador:</span><svg style="left:321px;top:338px" width="18" height="16" viewBox="0 0 18 16"><defs><linearGradient id="cb" x1="0" y1="0" x2="0" y2="1"><stop offset="0" stop-color="#f58d5e"/><stop offset="1" stop-color="#e8663a"/></linearGradient></defs>
<rect x="1" y="1.6" width="13.6" height="13" rx="2" fill="url(#cb)" stroke="#cc592e" stroke-width="1"/><rect x="2" y="2.6" width="11.6" height="11" rx="1.2" fill="none" stroke="#f9a27c" stroke-width="0.8" opacity="0.8"/><path d="M4 7.6 L7.4 11 L16 2.2" fill="none" stroke="#fbc0a0" stroke-width="4" stroke-linejoin="round" opacity="0.55"/><path d="M4 7.6 L7.4 11 L11 7.2" fill="none" stroke="#7a3c26" stroke-width="2.7" stroke-linejoin="round"/><path d="M10 8.4 L16.4 1.8" fill="none" stroke="#7a3c26" stroke-width="2.1"/></svg><span class="t " style="left:231.53px;top:359.50px;font-size:15px;line-height:17px;color:#3c3b37;transform:scaleX(0.9840);transform-origin:0 0;">Mensaje:</span><span class="t " style="left:298.22px;top:361.40px;font-size:15px;line-height:17px;color:#3c3b37;transform:scaleX(0.9812);transform-origin:0 0;font-weight:bold;">system runing</span><div class="a" style="left:0;top:777px;width:1280px;height:1px;background:#dcd9d5;"></div><div class="a" style="left:0;top:778px;width:1280px;height:1px;background:#fafaf9;"></div><div class="a" style="left:1213px;top:781px;width:13px;height:15px;background:#e9e8e7;border-right:1px solid #000;border-bottom:1px solid #000;box-sizing:content-box;"></div><svg style="left:1216px;top:787px" width="8" height="5" viewBox="0 0 8 5"><path d="M0 0 L7.6 0 L3.8 4.4 Z" fill="#000"/></svg><span class="t " style="left:1234.13px;top:780.60px;font-size:18px;line-height:20px;color:#3c3b37;">*</span><span class="t " style="left:1247.83px;top:780.50px;font-size:15px;line-height:17px;color:#ff0000;transform:scaleX(1.1408);transform-origin:0 0;">root</span><div class="a" style="left:447px;top:109px;width:512px;height:585px;border-radius:7px 7px 0 0;box-shadow:0 6px 40px 2px rgba(0,0,0,0.65);background:#3c3b37;"></div><div class="a" style="left:447px;top:109px;width:512px;height:585px;border-radius:7px 7px 0 0;background:#2f2e2b;overflow:hidden;"><div class="a" style="left:-447px;top:-109px;width:1280px;height:800px;"><div class="a" style="left:447px;top:109px;width:512px;height:29px;background:linear-gradient(#58574f 0%,#4b4a45 25%,#3f3e3a 45%,#3c3b37 55%,#3c3b37 100%);border-radius:7px 7px 0 0;box-shadow:inset 0 1px 0 #62615a;"></div><div class="a" style="left:457px;top:114px;width:55px;height:19px;border-radius:10px;background:linear-gradient(#3a3935,#46453f);box-shadow:inset 0 1px 1px rgba(0,0,0,0.35),0 1px 0 rgba(255,255,255,0.08);"></div><svg style="left:458px;top:115px" width="54" height="18" viewBox="0 0 54 18"><defs>
<linearGradient id="bc" x1="0" y1="0" x2="0" y2="1"><stop offset="0" stop-color="#f79674"/><stop offset="0.5" stop-color="#ee6a3c"/><stop offset="1" stop-color="#dd4f1f"/></linearGradient>
<linearGradient id="bg" x1="0" y1="0" x2="0" y2="1"><stop offset="0" stop-color="#8e8d86"/><stop offset="1" stop-color="#66655f"/></linearGradient></defs>
<circle cx="8.5" cy="8.5" r="7.2" fill="url(#bc)" stroke="#8c3a1c" stroke-width="0.8"/>
<path d="M5.9 5.9 L11.1 11.1 M11.1 5.9 L5.9 11.1" stroke="#4b2413" stroke-width="1.3" stroke-linecap="round"/>
<circle cx="26.5" cy="8.5" r="7.4" fill="url(#bg)" stroke="#4e4d48" stroke-width="0.6"/>
<path d="M23.3 8.8 L29.7 8.8" stroke="#3c3b37" stroke-width="1.3"/>
<circle cx="44.5" cy="8.5" r="7.4" fill="url(#bg)" stroke="#4e4d48" stroke-width="0.6"/>
<rect x="41.6" y="5.8" width="5.8" height="5.6" fill="none" stroke="#3c3b37" stroke-width="1.2"/></svg><span class="t " style="left:523.23px;top:115.00px;font-size:15px;line-height:17px;color:#dfdbd2;transform:scaleX(0.9499);transform-origin:0 0;font-weight:bold;text-shadow:0 -1px 0 rgba(20,20,18,0.55),0 1px 0 rgba(20,20,18,0.35);">KM 101</span><div class="a" style="left:448px;top:138px;width:510px;height:555px;background:#f2f1f0;"></div><div class="a" style="left:453px;top:147px;width:500px;height:500px;background:#c6c5ff;"></div><div class="a" style="left:458px;top:152px;width:120px;height:50px;background:#aaaaff;"></div><span class="t " style="left:464.99px;top:159.60px;font-size:11px;line-height:12px;color:#000;">50</span><span class="t " style="left:462.29px;top:172.70px;font-size:11px;line-height:12px;color:#000;word-spacing:0.6px;">Grados centigrados</span><div class="a" style="left:458px;top:207px;width:120px;height:50px;background:#aaaaff;"></div><span class="t " style="left:464.99px;top:214.60px;font-size:11px;line-height:12px;color:#000;">50</span><span class="t " style="left:462.29px;top:227.70px;font-size:11px;line-height:12px;color:#000;word-spacing:0.6px;">Grados centigrados</span><div class="a" style="left:458px;top:262px;width:120px;height:50px;background:#aaaaff;"></div><span class="t " style="left:464.99px;top:269.60px;font-size:11px;line-height:12px;color:#000;">50</span><span class="t " style="left:462.29px;top:282.70px;font-size:11px;line-height:12px;color:#000;word-spacing:0.6px;">Grados centigrados</span><div class="a" style="left:458px;top:316px;width:120px;height:50px;background:#aaaaff;"></div><span class="t " style="left:462.29px;top:323.60px;font-size:11px;line-height:12px;color:#000;">100</span><span class="t " style="left:462.29px;top:336.70px;font-size:11px;line-height:12px;color:#000;word-spacing:0.6px;">Grados centigrados</span><div class="a" style="left:584px;top:157px;width:200px;height:200px;background:#fff;"></div><div class="a" style="left:637px;top:207px;width:98px;height:98px;border-radius:1.5px;background:linear-gradient(#0bff0b,#03ef03 50%,#00dd00);"></div><svg style="left:637px;top:207px" width="98" height="98" viewBox="0 0 98 98" shape-rendering="crispEdges"><g stroke="#f000f0" stroke-width="1" stroke-dasharray="1 1" fill="none"><path d="M3 2.5 L95 2.5"/><path d="M3 95.5 L95 95.5"/><path d="M2.5 3 L2.5 95"/><path d="M95.5 3 L95.5 95"/></g></svg><div class="a" style="left:457px;top:381px;width:100px;height:100px;background:#fff;"></div><div class="a" style="left:564px;top:382px;width:100px;height:100px;background:#fff;"></div><div class="a" style="left:458px;top:420px;width:98px;height:22px;border:1px solid #8f8f8f;border-radius:5px;background:linear-gradient(#e4e4e4,#d2d2d2 50%,#c4c4c4);box-sizing:border-box;box-shadow:0 1px 0 rgba(255,255,255,0.7);"></div><svg style="left:543.5px;top:426.5px" width="6" height="4" viewBox="0 0 6 4"><path d="M0 3.7 L3 0.3 L6 3.7 Z" fill="#787878"/></svg><svg style="left:543.5px;top:435.0px" width="6" height="4" viewBox="0 0 6 4"><path d="M0 0.3 L6 0.3 L3 3.7 Z" fill="#787878"/></svg><span class="t " style="left:462.82px;top:424.20px;font-size:10.5px;line-height:12px;color:#4c4c4c;transform:scaleX(1.0205);transform-origin:0 0;">11</span><div class="a" style="left:582px;top:418px;width:58px;height:24px;border:1px solid #8f8f8f;border-radius:5px;background:linear-gradient(#e4e4e4,#d2d2d2 50%,#c4c4c4);box-sizing:border-box;box-shadow:0 1px 0 rgba(255,255,255,0.7);"></div><svg style="left:627.5px;top:425.6px" width="6" height="4" viewBox="0 0 6 4"><path d="M0 3.7 L3 0.3 L6 3.7 Z" fill="#787878"/></svg><svg style="left:627.5px;top:434.4px" width="6" height="4" viewBox="0 0 6 4"><path d="M0 0.3 L6 0.3 L3 3.7 Z" fill="#787878"/></svg><span class="t " style="left:587.55px;top:422.40px;font-size:13px;line-height:15px;color:#4c4c4c;transform:scaleX(1.0727);transform-origin:0 0;">100</span><div class="a" style="left:448px;top:655px;width:510px;height:1px;background:#b8b4ad;"></div><div class="a" style="left:448px;top:656px;width:510px;height:1px;background:#fbfbfa;"></div><svg style="left:765px;top:666px" width="18" height="18" viewBox="0 0 18 18"><defs>
<linearGradient id="prb" x1="0" y1="0" x2="0" y2="1"><stop offset="0" stop-color="#58b4ff"/><stop offset="1" stop-color="#0a78ea"/></linearGradient>
<linearGradient id="prp" x1="0" y1="0" x2="1" y2="1"><stop offset="0" stop-color="#ffffff"/><stop offset="1" stop-color="#dce4f0"/></linearGradient></defs>
<rect x="5.6" y="1" width="7.2" height="8" fill="url(#prp)" stroke="#c8ccd8" stroke-width="0.6"/>
<rect x="1.1" y="6.2" width="15.8" height="10.6" rx="2.6" fill="#e4e6ee" stroke="#b4b8c8" stroke-width="0.7"/>
<rect x="4.6" y="8.2" width="8.8" height="3" fill="url(#prb)"/>
<rect x="4" y="11.6" width="10" height="1.8" fill="#404040"/>
<rect x="4.4" y="13.4" width="9.2" height="3.4" fill="#fdfdfd" stroke="#c4c8d4" stroke-width="0.5"/>
</svg><svg style="left:814px;top:666px" width="17" height="18" viewBox="0 0 17 18">
<rect x="2" y="1.2" width="14" height="15.8" fill="#b9b9b9" stroke="#7c7c7c" stroke-width="0.7"/>
<rect x="2.8" y="2" width="12.4" height="3.4" fill="#a0a0a0"/>
<path d="M3 6.6 L15 6.6" stroke="#f0ee60" stroke-width="1"/>
<path d="M3 9.6 L15 9.6 M3 12.6 L15 12.6 M6.6 6 L6.6 16.4 M10 6 L10 16.4" stroke="#e2e2e2" stroke-width="0.8"/>
<rect x="3" y="13.4" width="9" height="3.2" fill="#d6d6d6"/>
<path d="M0.9 2 L0.9 16.4" stroke="#222" stroke-width="0.9" stroke-dasharray="0.9 1.5"/>
<g fill="#58d058"><rect x="0.3" y="0.9" width="1.2" height="1.2"/><rect x="15.4" y="0.9" width="1.2" height="1.2"/><rect x="0.3" y="16" width="1.2" height="1.2"/><rect x="15.4" y="16" width="1.2" height="1.2"/></g>
<path d="M16 12.2 L16 17 L11.2 17 Z" fill="#262626"/>
<path d="M7.6 6.6 L15 10 L7.6 13.2 Z" fill="#f8f000" stroke="#9a9410" stroke-width="0.4"/>
</svg><svg style="left:794.7px;top:673.7px" width="8" height="6" viewBox="0 0 8 6"><path d="M0.2 0.3 L7.6 0.3 L3.9 5.3 Z" fill="#8a8a8a"/><path d="M0.2 0.5 L7.6 0.5" stroke="#6a6a6a" stroke-width="0.9"/></svg><svg style="left:842.6px;top:673.7px" width="8" height="6" viewBox="0 0 8 6"><path d="M0.2 0.3 L7.6 0.3 L3.9 5.3 Z" fill="#8a8a8a"/><path d="M0.2 0.5 L7.6 0.5" stroke="#6a6a6a" stroke-width="0.9"/></svg><div class="a" style="left:861px;top:667px;width:1px;height:17px;background:#d6d3ce;"></div><div class="a" style="left:862px;top:667px;width:1px;height:17px;background:#fbfbfa;"></div><svg style="left:872px;top:666px" width="18" height="18" viewBox="0 0 18 18"><defs><radialGradient id="gl" cx="0.45" cy="0.35" r="0.7"><stop offset="0" stop-color="#14e614"/><stop offset="0.6" stop-color="#00c000"/><stop offset="1" stop-color="#009a00"/></radialGradient></defs><circle cx="9" cy="9" r="8" fill="url(#gl)"/></svg><span class="t " style="left:902.52px;top:666.80px;font-size:15px;line-height:17px;color:#ff0000;transform:scaleX(1.1563);transform-origin:0 0;">root</span><div class="a" style="left:946px;top:689px;width:1px;height:1px;background:#cbc8c3;"></div><div class="a" style="left:947px;top:690px;width:1px;height:1px;background:#fff;"></div><div class="a" style="left:949px;top:686px;width:1px;height:1px;background:#cbc8c3;"></div><div class="a" style="left:950px;top:687px;width:1px;height:1px;background:#fff;"></div><div class="a" style="left:949px;top:689px;width:1px;height:1px;background:#cbc8c3;"></div><div class="a" style="left:950px;top:690px;width:1px;height:1px;background:#fff;"></div><div class="a" style="left:952px;top:683px;width:1px;height:1px;background:#cbc8c3;"></div><div class="a" style="left:953px;top:684px;width:1px;height:1px;background:#fff;"></div><div class="a" style="left:952px;top:686px;width:1px;height:1px;background:#cbc8c3;"></div><div class="a" style="left:953px;top:687px;width:1px;height:1px;background:#fff;"></div><div class="a" style="left:952px;top:689px;width:1px;height:1px;background:#cbc8c3;"></div><div class="a" style="left:953px;top:690px;width:1px;height:1px;background:#fff;"></div><div class="a" style="left:955px;top:680px;width:1px;height:1px;background:#cbc8c3;"></div><div class="a" style="left:956px;top:681px;width:1px;height:1px;background:#fff;"></div><div class="a" style="left:955px;top:683px;width:1px;height:1px;background:#cbc8c3;"></div><div class="a" style="left:956px;top:684px;width:1px;height:1px;background:#fff;"></div><div class="a" style="left:955px;top:686px;width:1px;height:1px;background:#cbc8c3;"></div><div class="a" style="left:956px;top:687px;width:1px;height:1px;background:#fff;"></div><div class="a" style="left:955px;top:689px;width:1px;height:1px;background:#cbc8c3;"></div><div class="a" style="left:956px;top:690px;width:1px;height:1px;background:#fff;"></div><div class="a" style="left:957px;top:138px;width:1px;height:555px;background:#f8f8f7;"></div><div class="a" style="left:448px;top:692px;width:510px;height:1px;background:#fbfbfa;"></div><svg style="left:726.2px;top:310.5px" width="15" height="23" viewBox="0 0 15 23"><g transform="scale(1,0.925)"><path d="M1.3 0.8 L1.3 18.6 L5.2 15 L7.9 20.9 L10.5 19.7 L7.9 13.9 L12.9 13.4 Z" transform="translate(0.8,0.9)" fill="#000" opacity="0.18"/><path d="M1.3 0.8 L1.3 18.6 L5.2 15 L7.9 20.9 L10.5 19.7 L7.9 13.9 L12.9 13.4 Z" fill="#fff" stroke="#000" stroke-width="1.25" stroke-linejoin="miter"/></g></svg></div></div></div></body></html>
